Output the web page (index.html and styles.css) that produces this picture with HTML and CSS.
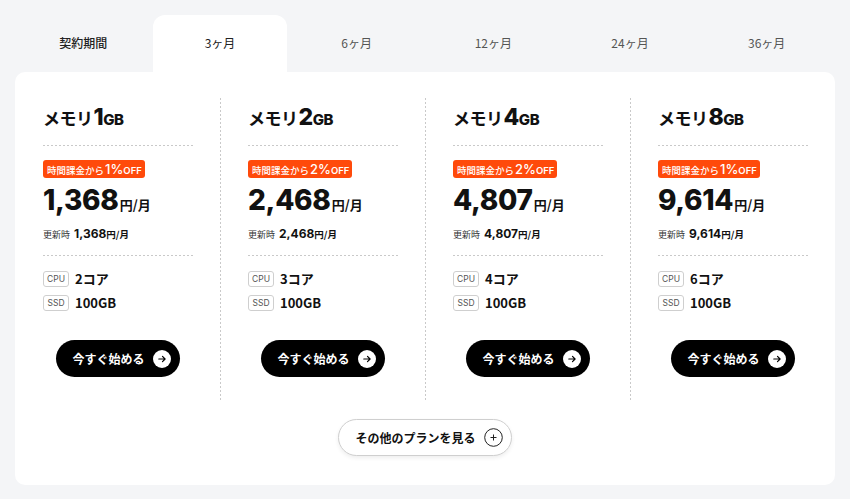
FILE: index.html
```html
<!DOCTYPE html>
<html lang="ja">
<head>
<meta charset="utf-8">
<title>料金プラン</title>
<link rel="stylesheet" href="styles.css">
</head>
<body>
<div class="wrap">
  <div class="tabs">
    <div class="tab tab-label">契約期間</div>
    <div class="tab active">3ヶ月</div>
    <div class="tab">6ヶ月</div>
    <div class="tab">12ヶ月</div>
    <div class="tab">24ヶ月</div>
    <div class="tab">36ヶ月</div>
  </div>
  <div class="card">
    <div class="plans">
      <div class="plan">
        <div class="plan-title">メモリ<span class="num">1</span><span class="gb">GB</span></div>
        <div class="price-block">
          <div class="badge"><span class="bt">時間課金から</span><span class="pct">1%</span><span class="off">OFF</span></div>
          <div class="price"><span class="amount">1,368</span><span class="unit">円/月</span></div>
          <div class="renew"><span class="renew-label">更新時</span><span class="renew-amount">1,368</span><span class="renew-unit">円/月</span></div>
        </div>
        <div class="specs">
          <div class="spec"><span class="tag">CPU</span><span class="val">2コア</span></div>
          <div class="spec"><span class="tag">SSD</span><span class="val">100GB</span></div>
        </div>
        <div class="btn-row"><a class="btn" href="#">今すぐ始める<span class="arrow"><svg viewBox="0 0 18 18" width="18" height="18"><circle cx="9" cy="9" r="9" fill="#fff"/><path d="M5.8 9h6.2M9.5 6.4L12.1 9 9.5 11.6" fill="none" stroke="#000" stroke-width="1.2" stroke-linecap="round" stroke-linejoin="round"/></svg></span></a></div>
      </div>
      <div class="plan">
        <div class="plan-title">メモリ<span class="num">2</span><span class="gb">GB</span></div>
        <div class="price-block">
          <div class="badge"><span class="bt">時間課金から</span><span class="pct">2%</span><span class="off">OFF</span></div>
          <div class="price"><span class="amount">2,468</span><span class="unit">円/月</span></div>
          <div class="renew"><span class="renew-label">更新時</span><span class="renew-amount">2,468</span><span class="renew-unit">円/月</span></div>
        </div>
        <div class="specs">
          <div class="spec"><span class="tag">CPU</span><span class="val">3コア</span></div>
          <div class="spec"><span class="tag">SSD</span><span class="val">100GB</span></div>
        </div>
        <div class="btn-row"><a class="btn" href="#">今すぐ始める<span class="arrow"><svg viewBox="0 0 18 18" width="18" height="18"><circle cx="9" cy="9" r="9" fill="#fff"/><path d="M5.8 9h6.2M9.5 6.4L12.1 9 9.5 11.6" fill="none" stroke="#000" stroke-width="1.2" stroke-linecap="round" stroke-linejoin="round"/></svg></span></a></div>
      </div>
      <div class="plan">
        <div class="plan-title">メモリ<span class="num">4</span><span class="gb">GB</span></div>
        <div class="price-block">
          <div class="badge"><span class="bt">時間課金から</span><span class="pct">2%</span><span class="off">OFF</span></div>
          <div class="price"><span class="amount">4,807</span><span class="unit">円/月</span></div>
          <div class="renew"><span class="renew-label">更新時</span><span class="renew-amount">4,807</span><span class="renew-unit">円/月</span></div>
        </div>
        <div class="specs">
          <div class="spec"><span class="tag">CPU</span><span class="val">4コア</span></div>
          <div class="spec"><span class="tag">SSD</span><span class="val">100GB</span></div>
        </div>
        <div class="btn-row"><a class="btn" href="#">今すぐ始める<span class="arrow"><svg viewBox="0 0 18 18" width="18" height="18"><circle cx="9" cy="9" r="9" fill="#fff"/><path d="M5.8 9h6.2M9.5 6.4L12.1 9 9.5 11.6" fill="none" stroke="#000" stroke-width="1.2" stroke-linecap="round" stroke-linejoin="round"/></svg></span></a></div>
      </div>
      <div class="plan">
        <div class="plan-title">メモリ<span class="num">8</span><span class="gb">GB</span></div>
        <div class="price-block">
          <div class="badge"><span class="bt">時間課金から</span><span class="pct">1%</span><span class="off">OFF</span></div>
          <div class="price"><span class="amount">9,614</span><span class="unit">円/月</span></div>
          <div class="renew"><span class="renew-label">更新時</span><span class="renew-amount">9,614</span><span class="renew-unit">円/月</span></div>
        </div>
        <div class="specs">
          <div class="spec"><span class="tag">CPU</span><span class="val">6コア</span></div>
          <div class="spec"><span class="tag">SSD</span><span class="val">100GB</span></div>
        </div>
        <div class="btn-row"><a class="btn" href="#">今すぐ始める<span class="arrow"><svg viewBox="0 0 18 18" width="18" height="18"><circle cx="9" cy="9" r="9" fill="#fff"/><path d="M5.8 9h6.2M9.5 6.4L12.1 9 9.5 11.6" fill="none" stroke="#000" stroke-width="1.2" stroke-linecap="round" stroke-linejoin="round"/></svg></span></a></div>
      </div>
    </div>
    <div class="more-row">
      <a class="more" href="#">その他のプランを見る<span class="plus"><svg viewBox="0 0 19 19" width="19" height="19"><circle cx="9.5" cy="9.5" r="8.8" fill="none" stroke="#222" stroke-width="1"/><path d="M9.5 6.5v6M6.5 9.5h6" stroke="#222" stroke-width="1" fill="none"/></svg></span></a>
    </div>
  </div>
</div>
</body>
</html>
```

FILE: styles.css
```css
* { box-sizing: border-box; }
html, body { margin: 0; padding: 0; }
body {
  background: #f4f5f7;
  font-family: "Noto Sans CJK JP", "Noto Sans", sans-serif;
  color: #111;
  width: 850px;
  height: 499px;
  overflow: hidden;
}
.wrap { padding: 15px 15px 14px; }

.tabs {
  display: grid;
  grid-template-columns: repeat(6, 1fr);
  height: 57px;
}
.tab {
  display: flex;
  align-items: center;
  justify-content: center;
  font-size: 12px;
  line-height: 16px;
  color: #555;
  padding-bottom: 2px;
}
.tab-label { color: #222; font-weight: 500; }
.tab.active {
  background: #fff;
  color: #222;
  border-radius: 12px 12px 0 0;
  margin: 0 1px;
}

.card {
  background: #fff;
  border-radius: 10px;
  padding-top: 26px;
  height: 413px;
}
.plans {
  display: grid;
  grid-template-columns: repeat(4, 1fr);
}
.plan {
  padding: 6px 27px 25px 28px;
  background-image: linear-gradient(to bottom, #c9c9c9 50%, transparent 50%);
  background-size: 1px 4px;
  background-repeat: repeat-y;
  background-position: left top;
}
.plan:first-child { background-image: none; }

.plan-title {
  height: 42px;
  font-size: 17px;
  font-weight: 700;
  line-height: 24px;
  padding-top: 1px;
  padding-bottom: 17px;
  background-image: linear-gradient(to right, #c9c9c9 50%, transparent 50%);
  background-size: 4px 1px;
  background-repeat: repeat-x;
  background-position: left bottom;
  letter-spacing: -0.5px;
}
.plan-title .num {
  font-family: "Inter", sans-serif;
  font-weight: 800;
  font-size: 23px;
  margin-left: 1px;
}
.plan-title .gb {
  font-family: "Inter", sans-serif;
  font-weight: 800;
  font-size: 15px;
}

.price-block {
  padding: 14px 0 14px;
  background-image: linear-gradient(to right, #c9c9c9 50%, transparent 50%);
  background-size: 4px 1px;
  background-repeat: repeat-x;
  background-position: left bottom;
}
.badge {
  display: flex;
  align-items: baseline;
  width: fit-content;
  height: 18px;
  padding: 0 3px 0 4px;
  background: #ff4a0b;
  color: #fff;
  border-radius: 3px;
  font-weight: 500;
  line-height: 18px;
}
.badge .bt { font-size: 9.5px; line-height: 18px; }
.badge .pct {
  font-family: "Inter", sans-serif;
  font-size: 13px;
  line-height: 18px;
  font-weight: 500;
  margin-left: 1px;
}
.badge .off {
  font-family: "Inter", sans-serif;
  font-size: 9.5px;
  line-height: 18px;
  font-weight: 600;
}
.price {
  margin-top: 5px;
  height: 34px;
  line-height: 34px;
  display: flex;
  align-items: baseline;
}
.price .amount {
  font-family: "Inter", sans-serif;
  font-weight: 800;
  font-size: 28px;
  letter-spacing: -0.3px;
}
.price .unit {
  font-size: 13px;
  font-weight: 700;
  margin-left: 1px;
}
.renew {
  margin-top: 9px;
  height: 16px;
  line-height: 16px;
  display: flex;
  align-items: baseline;
}
.renew-label { font-size: 9px; color: #333; margin-right: 4px; }
.renew-amount {
  font-family: "Inter", sans-serif;
  font-weight: 700;
  font-size: 12px;
}
.renew-unit { font-size: 9.5px; font-weight: 700; }

.specs {
  padding-top: 15px;
  display: flex;
  flex-direction: column;
  gap: 8px;
}
.spec {
  display: flex;
  align-items: center;
  height: 16px;
  line-height: 16px;
}
.tag {
  display: inline-flex;
  align-items: center;
  justify-content: center;
  height: 16px;
  width: 26px;
  border: 1px solid #cfcfcf;
  border-radius: 3px;
  font-family: "Inter", sans-serif;
  font-size: 8.5px;
  color: #555;
}
.val {
  margin-left: 6px;
  font-size: 13px;
  font-weight: 700;
  font-family: "Noto Sans CJK JP", sans-serif;
}

.btn-row {
  margin-top: 29px;
  display: flex;
  justify-content: center;
}
.btn {
  display: inline-flex;
  align-items: center;
  height: 37px;
  padding: 0 9px 0 16px;
  background: #000;
  color: #fff;
  border-radius: 19px;
  font-size: 12px;
  line-height: 16px;
  font-weight: 700;
  text-decoration: none;
}
.arrow { display: inline-flex; margin-left: 8px; }

.more-row {
  display: flex;
  justify-content: center;
  margin-top: 17px;
}
.more {
  display: inline-flex;
  align-items: center;
  height: 37px;
  padding: 0 8px 0 16px;
  border: 1px solid #cfcfcf;
  border-radius: 19px;
  background: #fff;
  box-shadow: 0 2px 4px rgba(0,0,0,0.07);
  color: #111;
  font-size: 12px;
  line-height: 16px;
  font-weight: 700;
  text-decoration: none;
}
.plus { display: inline-flex; margin-left: 8px; }
```
